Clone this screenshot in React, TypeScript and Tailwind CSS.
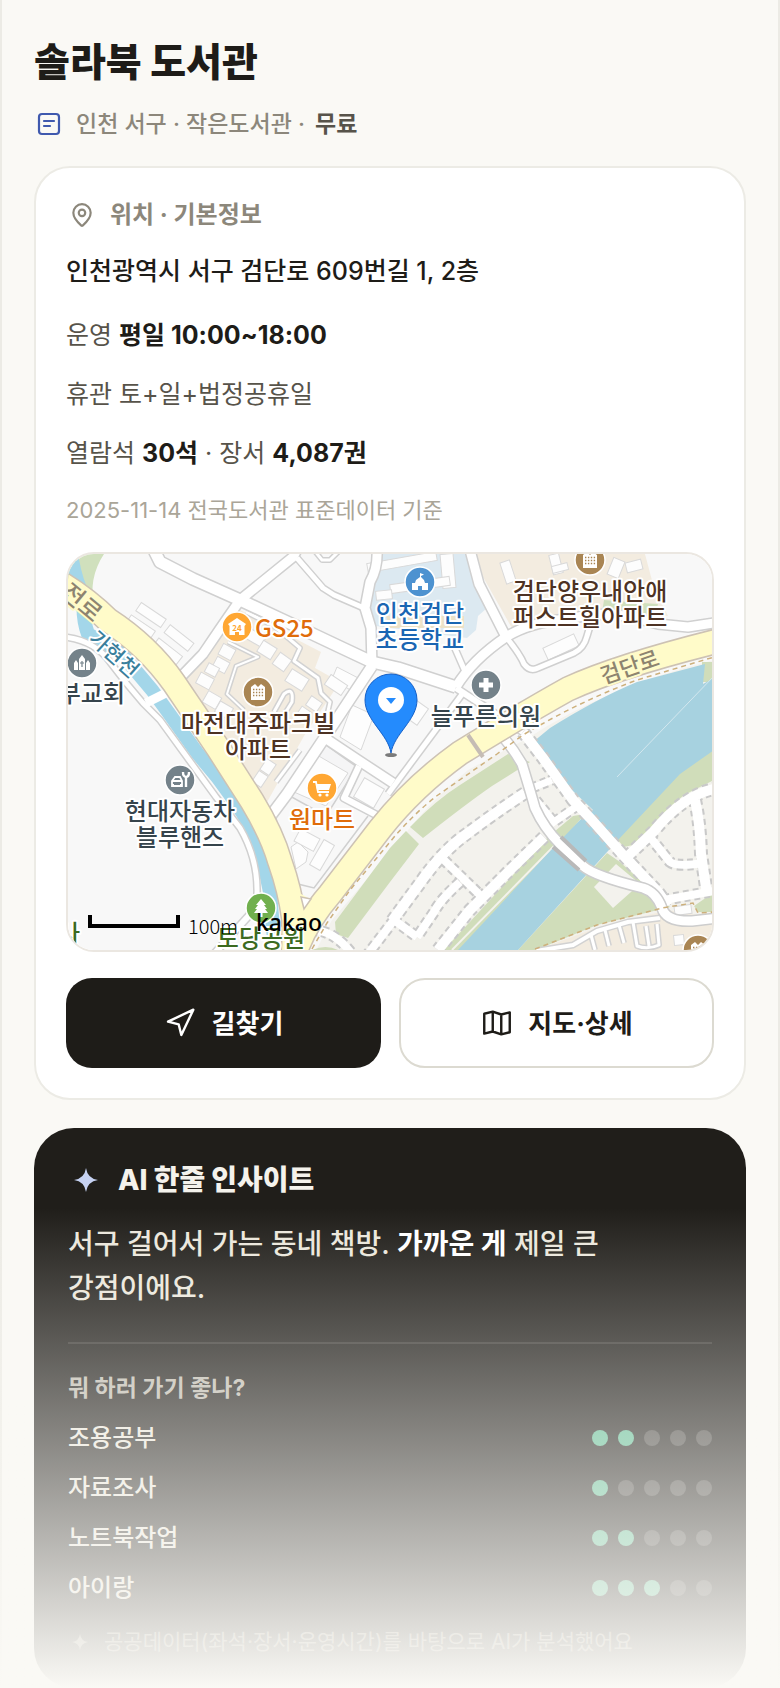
import type { ReactNode } from 'react';
import { MapPin, Navigation } from 'lucide-react';

type Marker = {
  x: number;
  y: number;
  color: string;
  glyph: ReactNode;
};

type Label = {
  x: number;
  y: number;
  text: string;
  color: string;
  size?: number;
  rotate?: number;
  halo?: string;
  anchor?: 'start' | 'middle' | 'end';
};

type Road = {
  d: string;
  w: number;
};

const MAP_FONT = '"Noto Sans CJK KR", sans-serif';

const slate = '#74828a';
const brown = '#a98553';
const orange = '#ffa733';

const roads: Road[] = [
  { d: 'M85 -6 L92 8 L125 25 L172 46 L232 74 L270 92 L304 108 L330 114 L388 133', w: 11 },
  { d: 'M230 -6 L225 3 L172 46 L152 75 L135 100 L108 128', w: 9 },
  { d: 'M229 4 L255 34 L266 41 L296 54', w: 5 },
  { d: 'M246 -4 L254 6 L262 6 L272 -4', w: 3 },
  { d: 'M309 -4 Q310 14 302 28 L297 54 L303 74 L304 112', w: 9 },
  { d: 'M304 112 L255 186 L219 240 L204 260', w: 10 },
  { d: 'M257 184 L290 206 L325 229', w: 9 },
  { d: 'M320 240 L395 139', w: 5 },
  { d: 'M291 212 L276 244 L318 266', w: 6 },
  { d: 'M402 -4 L411 30 L438 83', w: 9 },
  { d: 'M388 133 Q404 106 438 83 Q462 68 500 65 L526 60 L560 62 L590 70 L620 73 L646 69', w: 9 },
  { d: 'M438 83 Q452 100 456 110 Q462 118 470 114 L506 99 Q516 94 519 82 L525 62', w: 5 },
  { d: 'M385 90 L399 122', w: 5 },
  { d: 'M388 134 L455 178', w: 6 },
  { d: 'M-4 83 Q26 86 42 108 L59 130 L75 149 L92 166 L148 243 L172 274 Q190 305 189 340', w: 5 },
  { d: 'M186 356 L146 400', w: 6 },
];

const paths: Road[] = [
  { d: 'M160 88 L190 103 L168 112 L159 140 L176 156', w: 2 },
  { d: 'M178 58 L206 72 L232 94 L226 107 L250 124 L253 139 L262 148 L258 166', w: 3 },
  { d: 'M206 158 L216 140 Q226 132 224 148 L214 164', w: 3 },
  { d: 'M232 196 L208 228', w: 3 },
  { d: 'M468 397 L505 391 L529 377 L560 368 L592 364', w: 4 },
  { d: 'M523 381 L527 396 M537 376 L541 392 M551 371 L556 389', w: 3 },
  { d: 'M565 368 L569 392 Q580 396 591 391 L589 370 M578 372 L581 392', w: 3 },
];

const trails: Road[] = [
  { d: 'M455 178 L475 204 L505 246 L522 264 L556 302 L590 338 L600 352', w: 10 },
  { d: 'M457 239 Q425 260 400 279 Q375 296 352 329 L324 367', w: 10 },
  { d: 'M476 283 L439 319 L402 356 L370 396', w: 10 },
  { d: 'M376 306 L414 343', w: 8 },
  { d: 'M392 328 Q372 346 366 358 L349 383', w: 8 },
  { d: 'M244 376 Q266 376 284 400 M326 366 L300 400 M326 366 L349 383', w: 8 },
  { d: 'M468 246 L486 268 L512 250 M464 234 L484 226', w: 7 },
  { d: 'M560 302 L586 277 Q616 240 650 234', w: 10 },
  { d: 'M582 283 L602 308 Q608 313 636 309', w: 8 },
  { d: 'M627 246 Q632 268 633 300 L639 340', w: 10 },
  { d: 'M596 346 L646 337', w: 8 },
];

// cx, cy, width, height, rotation
const buildings = [
  [83, 61, 30, 10, 34],
  [72, 74, 29, 12, 34],
  [111, 84, 30, 10, 38],
  [99, 98, 30, 12, 38],
  [159, 98, 14, 12, 28],
  [153, 111, 14, 12, 28],
  [144, 116, 12, 10, 28],
  [137, 127, 15, 12, 28],
  [188, 84, 17, 11, 30],
  [199, 96, 16, 13, 32],
  [214, 108, 14, 14, 36],
  [229, 126, 20, 14, 32],
  [144, 146, 15, 13, 30],
  [156, 156, 15, 12, 30],
  [246, 150, 13, 11, 34],
  [236, 160, 12, 11, 34],
  [200, 213, 11, 13, 34],
  [192, 225, 11, 13, 34],
  [268, 131, 20, 12, 34],
  [349, 159, 14, 20, 35],
  [301, 239, 23, 22, 30],
  [239, 286, 22, 14, 28],
  [254, 301, 12, 29, 30],
  [334, 8, 70, 9, -10],
  [380, 17, 13, 34, -5],
  [352, 31, 60, 9, -8],
  [316, 41, 16, 9, -6],
  [440, 18, 10, 22, -18],
  [488, 10, 10, 20, -14],
  [492, 14, 16, 7, -14],
  [548, 14, 12, 18, 22],
  [566, 12, 16, 10, -14],
  [493, 93, 34, 13, -25],
  [615, 356, 17, 9, -8],
  [611, 386, 10, 10, -6],
];

const gs = (
  <>
    <path d="M-9 -3 L0 -9 L9 -3 L7.500 -1 V8 H2 V5 H-2 V8 H-7.500 V-1 Z" fill="#fff" />
    <text
      x="0"
      y="0"
      fontSize="8"
      fontWeight="700"
      textAnchor="middle"
      dominantBaseline="central"
      fill={orange}
      fontFamily={MAP_FONT}
    >
      24
    </text>
  </>
);

const apartment = (
  <>
    <path d="M-7 8 V-5 L-3 -8 L0 -5 L3 -8 L7 -5 V8 Z" fill="#fff" />
    <path
      d="M-5 -2.500 H6 M-5 .5 H6 M-5 3.500 H6"
      stroke={brown}
      strokeWidth="1.400"
      strokeDasharray="1.400 1.500"
    />
  </>
);

const church = (
  <>
    <path
      d="M-8 7 V0 L-6 -3 L-4 0 V7 Z M-3 7 V-4 L0 -8 L3 -4 V7 Z M4 7 V0 L6 -3 L8 0 V7 Z"
      fill="#fff"
    />
    <path d="M0 -2 V4 M-2 0 H2" stroke={slate} strokeWidth="1.200" />
  </>
);

const school = (
  <path d="M-8 8 V1 H-5 L-4 -2 L0 -5 V-9 L4 -7.500 L1 -6 V-5 L4 -2 L5 1 H8 V8 H2 V4 H-2 V8 Z" fill="#fff" />
);

const clinic = (
  <path d="M-2.500 -7 H2.500 V-2.500 H7 V2.500 H2.500 V7 H-2.500 V2.500 H-7 V-2.500 H-2.500 Z" fill="#fff" />
);

const car = (
  <>
    <path
      d="M-8 7 V1 L-5 -3 H0 L2 1 V7 M-8 1 H2 M-8 5 H-6 M0 5 H2 M-8 6 H2"
      fill="none"
      stroke="#fff"
      strokeWidth="1.800"
    />
    <path d="M3 -8 Q3 -3 6 -3 Q9 -3 9 -8 M6 -3 V7" fill="none" stroke="#fff" strokeWidth="2.400" />
  </>
);

const cart = (
  <>
    <path d="M-9 -6 H-6 L-4 4 H7" fill="none" stroke="#fff" strokeWidth="1.800" />
    <path d="M-6 -4 H9 L7 2 H-5 Z" fill="#fff" />
    <circle cx="-2" cy="7" r="1.600" fill="#fff" />
    <circle cx="5" cy="7" r="1.600" fill="#fff" />
  </>
);

const tree = (
  <path d="M0 -9 L5 -3 H3 L6 1 H4 L7 5 H1.500 V9 H-1.500 V5 H-7 L-4 1 H-6 L-3 -3 H-5 Z" fill="#fff" />
);

const markers: Marker[] = [
  { x: 169, y: 73, color: orange, glyph: gs },
  { x: 190, y: 138, color: brown, glyph: apartment },
  { x: 14, y: 109, color: slate, glyph: church },
  { x: 352, y: 28, color: '#4d92d0', glyph: school },
  { x: 522, y: 6, color: brown, glyph: apartment },
  { x: 418, y: 131, color: slate, glyph: clinic },
  { x: 112, y: 226, color: slate, glyph: car },
  { x: 254, y: 234, color: orange, glyph: cart },
  { x: 193, y: 354, color: '#71b04e', glyph: tree },
  { x: 630, y: 396, color: brown, glyph: apartment },
];

const labels: Label[] = [
  { x: 15, y: 47, text: '전로', color: '#8d8470', rotate: 40, halo: '#fffbc9' },
  { x: 47, y: 99, text: '가현천', color: '#3a7f9c', size: 21, rotate: 42 },
  { x: 561, y: 111, text: '검단로', color: '#8d8470', size: 22, rotate: -19, halo: '#fffbc9' },
  { x: 187, y: 72, text: 'GS25', color: '#e06c0a', anchor: 'start' },
  { x: 190, y: 167, text: '마전대주파크빌', color: '#4d3223' },
  { x: 190, y: 193, text: '아파트', color: '#4d3223' },
  { x: 57, y: 137, text: '부교회', color: '#36444c', anchor: 'end' },
  { x: 352, y: 57, text: '인천검단', color: '#1a66b3' },
  { x: 352, y: 83, text: '초등학교', color: '#1a66b3' },
  { x: 522, y: 35, text: '검단양우내안애', color: '#4d3223' },
  { x: 522, y: 61, text: '퍼스트힐아파트', color: '#4d3223' },
  { x: 418, y: 160, text: '늘푸른의원', color: '#36444c' },
  { x: 112, y: 255, text: '현대자동차', color: '#36444c' },
  { x: 112, y: 281, text: '블루핸즈', color: '#36444c' },
  { x: 254, y: 263, text: '원마트', color: '#e06c0a' },
  { x: 193, y: 382, text: '토당공원', color: '#3c6a20' },
  { x: 12, y: 377, text: '사', color: '#3c6a20', anchor: 'end' },
];

function Streets({ items, casing }: { items: Road[]; casing: string }) {
  return (
    <g fill="none" strokeLinejoin="round">
      {items.map((road) => (
        <path key={road.d} d={road.d} stroke={casing} strokeWidth={road.w + 3} />
      ))}
      {items.map((road) => (
        <path key={road.d} d={road.d} stroke="#fff" strokeWidth={road.w} />
      ))}
    </g>
  );
}

function LibraryMap() {
  const westRoad =
    'M-6 30 Q20 46 40 66 Q80 92 106 129 L150 194 L184 247 Q204 280 212 308 Q222 336 226 366 L226 402';
  const eastRoad =
    'M226 402 Q236 370 262 340 L312 275 Q345 233 392 199 Q455 160 500 135 Q550 112 650 87';
  const solidRoad =
    'M436 184 Q446 196 454 210 Q462 236 467 254 Q476 274 492 290 L515 312 Q526 322 575 334 Q588 338 594 354 Q598 368 624 367 L650 364';

  return (
    <svg
      viewBox="0 0 644 396"
      preserveAspectRatio="xMidYMid slice"
      className="block h-[396px] w-full"
      role="img"
      aria-label="솔라북 도서관 지도"
    >
      <rect width="644" height="396" fill="#f8f8f8" />

      {/* land */}
      <path d="M0 0 H36 Q20 24 26 54 L0 24 Z" fill="#d0e0bd" />
      <path d="M172 56 L253 98 L247 114 L272 128 L236 182 L198 250 L112 132 L140 96 Z" fill="#f3ece0" />
      <path d="M402 0 H577 L586 34 L600 62 L545 60 L500 64 L445 76 Z" fill="#f3ece0" />
      <path d="M307 0 H400 L410 30 L419 54 L410 62 L408 76 L399 84 L308 72 L300 50 Z" fill="#dce9f1" />
      <path d="M318 62 H396 V74 H322 Z" fill="#ece2c8" />
      <path d="M536 46 L560 48 L590 50 L586 66 L534 58 Z" fill="#d0e0bd" />
      <path
        d="M246 400 L264 366 L332 286 Q362 247 400 216 L460 184 Q540 132 646 106 V400 Z"
        fill="#f3f2ed"
      />
      <path
        d="M342 273 Q368 246 392 231 L440 200 L462 208 L424 232 Q398 250 355 284 Z"
        fill="#d0ddba"
      />
      <path d="M338 277 L351 290 L322 328 L280 384 L268 380 L267 368 L322 294 Z" fill="#d0ddba" />
      <path d="M244 396 Q258 390 270 396 Z" fill="#d0ddba" />
      <path d="M376 396 L480 283 L505 262 L517 260 L487 295 L392 396 Z" fill="#d0ddba" />
      <path d="M384 396 L486 292" stroke="#f3f2ed" strokeWidth="2" />
      <path d="M450 396 L539 299 L552 308 L602 353 L529 371 L468 396 Z" fill="#d0ddba" />
      <path d="M526 333 L548 310 L572 330 L545 354 Z" fill="#f3f2ed" />
      <path d="M646 188 L612 218 L548 284 L556 293 L565 291 L589 268 Q606 246 622 238 L646 226 Z" fill="#d0ddba" />
      <path d="M634 108 H646 V128 H634 Z M626 352 L646 338 V358 H630 Z" fill="#d0ddba" />
      <path d="M468 396 L529 374 L600 356 L646 364 V396 Z" fill="#f3ece0" />

      {/* water */}
      <path
        d="M465 188 L482 174 Q530 144 569 128 L637 110 L635 130 L646 124 V196 L612 220 L550 286 L450 396 H390 L485 294 L514 264 L525 256 L466 200 Z"
        fill="#a7d2e0"
      />
      <path d="M646 122 L549 223" stroke="#d3e7ee" strokeWidth="1" />
      <path
        d="M4 6 Q8 28 16 44 Q14 64 20 80 L52 98 L84 136 L100 158 L130 200 L150 224 L169 250 Q182 270 189 289 Q198 314 202 338 L206 386"
        fill="none"
        stroke="#a3d6e9"
        strokeWidth="14"
      />

      {/* blocks */}
      <g fill="#f5f5f6" stroke="#d0d0d0" strokeWidth="1.500">
        <path d="M255 189 L289 213 L258 262 L220 241 Z" />
        <path d="M216 250 L208 262 L210 280 L230 330 L246 334 L300 262" fill="none" />
      </g>
      <g fill="#fdfdfd" stroke="#d9d9d9" strokeWidth="1">
        <path d="M249 201 L280 219 L258 252 L226 238 Z" />
        <path d="M284 151 L306 161 L293 196 L272 183 Z" />
        <path d="M269 113 L294 126 L289 140 L264 125 Z" />
        <path d="M223 293 L230 288 L240 298 L238 308 L228 315 Z" />
        {buildings.map(([x, y, w, h, r]) => (
          <rect
            key={`${x}-${y}`}
            x={x - w / 2}
            y={y - h / 2}
            width={w}
            height={h}
            transform={`rotate(${r} ${x} ${y})`}
          />
        ))}
      </g>

      <g fill="none">
        {trails.map((road) => (
          <path
            key={road.d}
            d={road.d}
            stroke="#c9c9c9"
            strokeWidth={road.w + 4}
            strokeDasharray="6 4"
          />
        ))}
        {trails.map((road) => (
          <path key={road.d} d={road.d} stroke="#fff" strokeWidth={road.w} />
        ))}
      </g>
      <Streets items={paths} casing="#d2d2d2" />
      <Streets items={roads} casing="#d0d0d0" />
      <Streets items={[{ d: solidRoad, w: 9 }]} casing="#cdcdcd" />
      <path d="M493 283 L518 307 M485 293 L511 316" stroke="#b9b9b9" strokeWidth="4" />
      <path d="M78 149 L100 138" stroke="#fff" strokeWidth="9" />

      {/* main roads */}
      <g fill="none" strokeLinejoin="round">
        <path d={westRoad} stroke="#cdc2b4" strokeWidth="26" />
        <path d={eastRoad} stroke="#cdc2b4" strokeWidth="26" />
        <path d={westRoad} stroke="#fffbc9" strokeWidth="23" />
        <path d={eastRoad} stroke="#fffbc9" strokeWidth="23" />
      </g>
      <path d="M222 334 L244 346 L262 350 L232 398 H214 Z" fill="#fffbc9" />
      <path d="M233 343 L243 345 L236 355 Z" fill="#fff" stroke="#cdc2b4" strokeWidth="1.500" />
      <path d="M400 181 L415 203" stroke="#c5bcb4" strokeWidth="4" />
      <g fill="none" stroke="#cdb07c" strokeWidth="1.500" strokeDasharray="5 4">
        <path d="M244 395 L259 369 L282 336 L322 288 Q345 260 370 241 L429 200 L455 181 Q510 148 569 126 L646 103" />
        <path d="M467 395 L529 371 L594 354 L625 349 L630 359 L646 358" />
      </g>

      {markers.map((marker) => (
        <g key={`${marker.x}-${marker.y}`} transform={`translate(${marker.x} ${marker.y})`}>
          <circle r="15" fill={marker.color} stroke="#fff" strokeWidth="1.500" />
          {marker.glyph}
        </g>
      ))}

      {labels.map((label) => (
        <text
          key={label.text}
          x={label.x}
          y={label.y}
          fill={label.color}
          fontSize={label.size ?? 24}
          fontWeight="500"
          fontFamily={MAP_FONT}
          textAnchor={label.anchor ?? 'middle'}
          dominantBaseline="central"
          stroke={label.halo ?? '#fff'}
          strokeWidth="4"
          strokeLinejoin="round"
          paintOrder="stroke"
          transform={label.rotate ? `rotate(${label.rotate} ${label.x} ${label.y})` : undefined}
        >
          {label.text}
        </text>
      ))}

      {/* library pin */}
      <ellipse cx="323" cy="201" rx="6" ry="2" fill="#7b7b7b" />
      <path
        d="M323 199 C320 180 297 166 297 146 A26 26 0 0 1 349 146 C349 166 326 180 323 199 Z"
        fill="#248bfd"
        stroke="#1560c8"
      />
      <circle cx="323" cy="146" r="13" fill="#fff" />
      <path d="M318 144 H328 L323 150 Z" fill="#248bfd" />

      {/* scale */}
      <path d="M22 361 V372 H110 V361" fill="none" stroke="#000" strokeWidth="4" />
      <text
        x="120"
        y="371"
        fontSize="20"
        fontWeight="300"
        fontFamily={MAP_FONT}
        dominantBaseline="central"
      >
        100m
      </text>
      <text
        x="188"
        y="377"
        fontSize="23"
        fontWeight="500"
        fontFamily='"Noto Sans", sans-serif'
      >
        kakao
      </text>
    </svg>
  );
}

function BadgeIcon() {
  return (
    <svg
      viewBox="0 0 30 30"
      className="size-[30px] shrink-0 text-[#3f59ae]"
      fill="none"
      stroke="currentColor"
      strokeWidth="2.200"
      strokeLinecap="round"
      aria-hidden="true"
    >
      <rect x="5" y="5" width="20" height="20" rx="3" />
      <path d="M10 12 H20 M10 17 H16" />
    </svg>
  );
}

function MapIcon() {
  return (
    <svg
      viewBox="0 0 24 24"
      className="size-[34px] shrink-0"
      fill="none"
      stroke="currentColor"
      strokeWidth="1.700"
      strokeLinejoin="round"
      aria-hidden="true"
    >
      <path d="M3 5.500 L9 4 L15 6 L21 4.500 V18.500 L15 20 L9 18 L3 19.500 Z M9 4 V18 M15 6 V20" />
    </svg>
  );
}

function Sparkle({ className }: { className: string }) {
  return (
    <svg viewBox="0 0 24 24" className={className} fill="currentColor" aria-hidden="true">
      <path d="M12 0 Q13.500 10.500 24 12 Q13.500 13.500 12 24 Q10.500 13.500 0 12 Q10.500 10.500 12 0 Z" />
    </svg>
  );
}

const scores = [
  { name: '조용공부', score: 2 },
  { name: '자료조사', score: 1 },
  { name: '노트북작업', score: 2 },
  { name: '아이랑', score: 3 },
];

function Dots({ score }: { score: number }) {
  return (
    <span className="flex gap-[10px]" role="img" aria-label={`5점 중 ${score}점`}>
      {[1, 2, 3, 4, 5].map((n) => (
        <span
          key={n}
          className={`size-4 rounded-full ${n <= score ? 'bg-[#5ebc93]' : 'bg-[#4a4844]'}`}
        />
      ))}
    </span>
  );
}

function InfoCard() {
  return (
    <section className="mt-[26px] rounded-[36px] border-2 border-[#ecebe5] bg-white p-[30px]">
      <h2 className="flex items-center gap-3 text-[24px] leading-[34px] font-bold text-[#8c877b]">
        <span className="flex w-8 justify-center">
          <MapPin className="size-[26px]" strokeWidth={2} />
        </span>
        위치 · 기본정보
      </h2>

      <p className="mt-[19px] text-[25px] leading-10 font-medium text-[#1e1c18]">
        인천광역시 서구 검단로 609번길 1, 2층
      </p>

      <div className="mt-6 space-y-[19px] text-[25px] leading-10 text-[#57534a]">
        <p>
          운영 <strong className="font-bold text-[#1e1c18]">평일 10:00~18:00</strong>
        </p>
        <p>휴관 토+일+법정공휴일</p>
        <p>
          열람석 <strong className="font-bold text-[#1e1c18]">30석</strong> · 장서{' '}
          <strong className="font-bold text-[#1e1c18]">4,087권</strong>
        </p>
        <p className="text-[22px] leading-9 text-[#aaa598]">2025-11-14 전국도서관 표준데이터 기준</p>
      </div>

      <div className="mt-6 overflow-hidden rounded-[28px] border-2 border-[#ebe7e1]">
        <LibraryMap />
      </div>

      <div className="mt-[26px] grid grid-cols-2 gap-[18px] text-[26px] font-bold">
        <button
          type="button"
          className="flex h-[90px] items-center justify-center gap-4 rounded-[26px] bg-[#1e1c18] text-white"
        >
          <Navigation className="size-8" strokeWidth={1.8} />
          길찾기
        </button>
        <button
          type="button"
          className="flex h-[90px] items-center justify-center gap-[14px] rounded-[26px] border-2 border-[#dcdad1] bg-white text-[#1e1c18]"
        >
          <MapIcon />
          지도·상세
        </button>
      </div>
    </section>
  );
}

function InsightCard() {
  return (
    <section className="mt-7 rounded-[40px] bg-[#201e1a] px-[34px] pt-[34px] pb-8">
      <h2 className="flex items-center gap-[14px] text-[28px] leading-9 font-extrabold text-[#f4f2ec]">
        <span className="flex w-9 justify-center">
          <Sparkle className="size-6 text-[#c6d2f2]" />
        </span>
        AI 한줄 인사이트
      </h2>

      <p className="mt-6 text-[28px] leading-[44px] font-medium break-keep text-[#ebe7dc]">
        서구 걸어서 가는 동네 책방. <strong className="font-bold text-white">가까운 게</strong> 제일 큰{' '}
        <span className="block">강점이에요.</span>
      </p>

      <div className="mt-8 border-t-2 border-[#383632] pt-7">
        <h3 className="text-[23px] leading-8 font-bold text-[#bdb9ae]">뭐 하러 가기 좋나?</h3>

        <ul className="mt-[19px] space-y-5">
          {scores.map((item) => (
            <li
              key={item.name}
              className="flex items-center justify-between text-[24px] leading-[30px] font-medium text-[#ebe7dc]"
            >
              {item.name}
              <Dots score={item.score} />
            </li>
          ))}
        </ul>
      </div>

      <p className="mt-[25px] flex items-center gap-3 text-[21px] leading-7 text-[#8c877b]">
        <span className="flex w-6 justify-center">
          <Sparkle className="size-4" />
        </span>
        공공데이터(좌석·장서·운영시간)를 바탕으로 AI가 분석했어요
      </p>
    </section>
  );
}

export default function App() {
  return (
    <main className="relative border-x-2 border-[#ecebe5] bg-[#faf9f5] px-8 pt-[38px] font-[Inter,'Noto_Sans_CJK_KR',sans-serif]">
      <h1 className="text-[39px] leading-[48px] font-extrabold text-[#1e1c18]">솔라북 도서관</h1>

      <p className="mt-[22px] flex items-center gap-3 text-[23px] leading-8 font-medium text-[#8c877b]">
        <BadgeIcon />
        <span>
          인천 서구 · 작은도서관 ·{' '}
          <strong className="ml-1 font-semibold text-[#57534a]">무료</strong>
        </span>
      </p>

      <InfoCard />
      <InsightCard />

      <div className="pointer-events-none absolute -inset-x-0.5 bottom-0 h-[480px] bg-linear-to-b from-[#faf9f5]/0 to-[#faf9f5]" />
    </main>
  );
}
